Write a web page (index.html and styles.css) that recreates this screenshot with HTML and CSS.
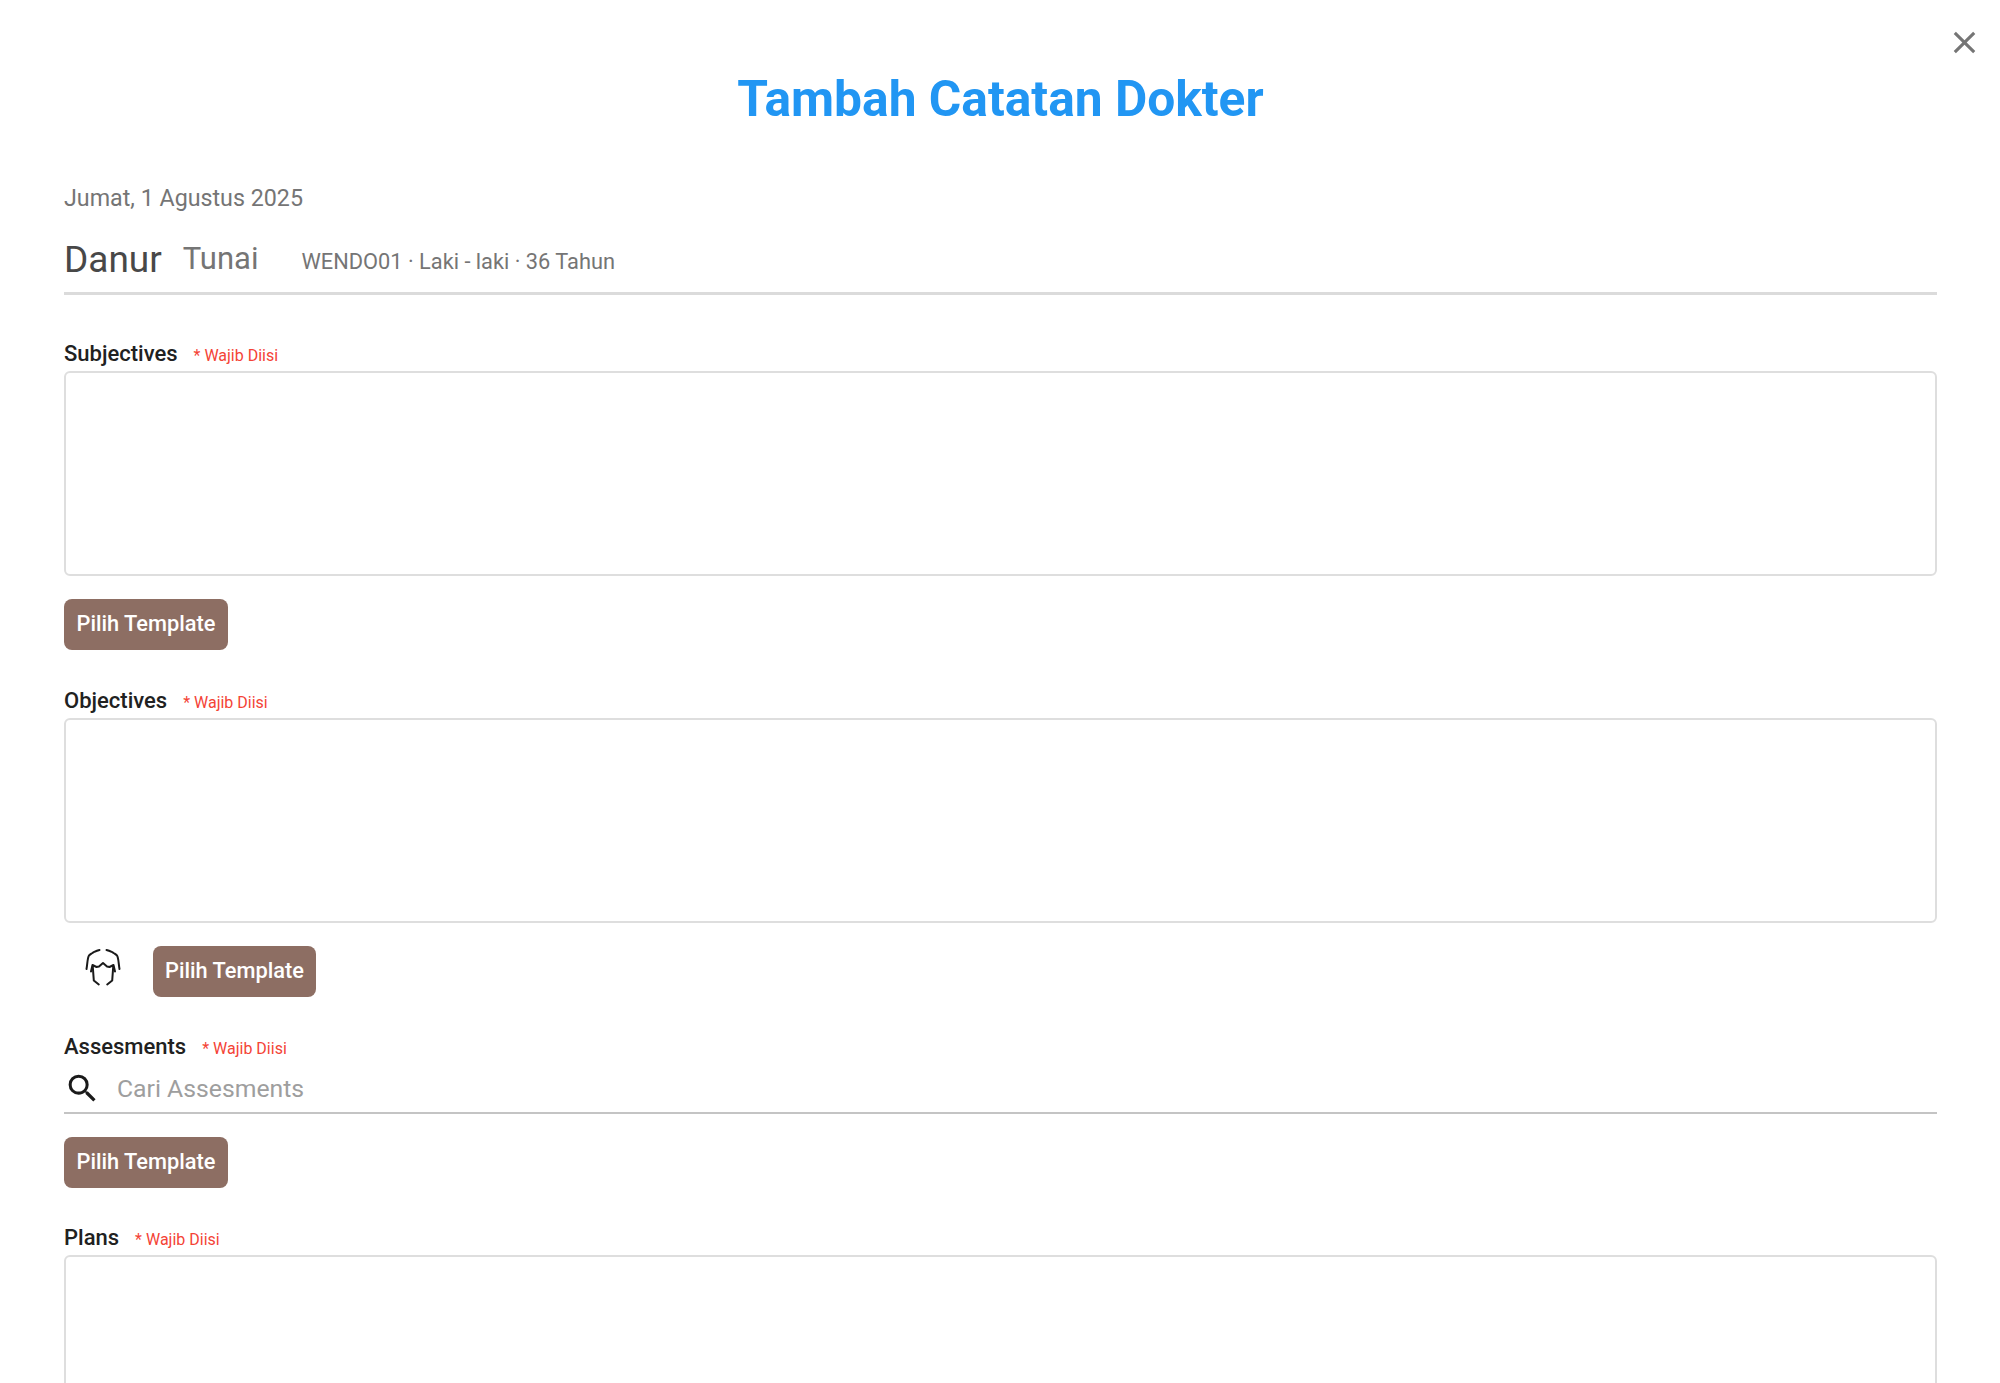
FILE: index.html
```html
<!DOCTYPE html>
<html lang="id">
<head>
<meta charset="utf-8">
<title>Tambah Catatan Dokter</title>
<link rel="stylesheet" href="styles.css">
</head>
<body>
<main class="dialog">
  <button class="close" aria-label="Tutup">
    <svg viewBox="0 0 24 24" width="37" height="37"><path d="M19 6.41 17.59 5 12 10.59 6.41 5 5 6.41 10.59 12 5 17.59 6.41 19 12 13.41 17.59 19 19 17.59 13.41 12z"/></svg>
  </button>
  <h1 class="title">Tambah Catatan Dokter</h1>
  <p class="date">Jumat, 1 Agustus 2025</p>
  <div class="patient">
    <span class="name">Danur</span>
    <span class="pay">Tunai</span>
    <span class="meta">WENDO01 · Laki - laki · 36 Tahun</span>
  </div>

  <section class="field">
    <div class="label"><span>Subjectives</span><em>* Wajib Diisi</em></div>
    <div class="box"></div>
    <div class="actions"><button class="tpl">Pilih Template</button></div>
  </section>

  <section class="field">
    <div class="label"><span>Objectives</span><em>* Wajib Diisi</em></div>
    <div class="box"></div>
    <div class="actions actions-tight">
      <span class="body-icon">
        <svg viewBox="0 0 52 52" width="52" height="52" fill="none" stroke="#1a1a1a" stroke-width="2" stroke-linecap="round" stroke-linejoin="round">
          <path d="M22.500 8C19 9 16.500 10 15.500 11 14 12 13 12.500 12 13.500 10.500 15.500 10.500 21 9.500 27"/>
          <path d="M29.500 8C33 9 35.500 10 36.500 11 38 12 39 12.500 40 13.500 41.500 15.500 41.500 21 42.500 27"/>
          <path d="M14 29.500 15.500 23 19.500 25 22 24.500 26 21 30 24.500 32.500 25 36.500 23 38 29.500"/>
          <path d="M15.800 25 16.800 38.500 21.800 42.500"/>
          <path d="M36.200 25 35.200 38.500 30.200 42.500"/>
        </svg>
      </span>
      <button class="tpl">Pilih Template</button>
    </div>
  </section>

  <section class="field">
    <div class="label"><span>Assesments</span><em>* Wajib Diisi</em></div>
    <div class="search">
      <svg viewBox="0 0 24 24" fill="#1a1a1a"><path d="M15.500 14h-.79l-.28-.27A6.470 6.470 0 0 0 16 9.500 6.500 6.500 0 1 0 9.500 16c1.610 0 3.090-.59 4.230-1.570l.27.28v.79l5 4.990L20.490 19l-4.990-5zm-6 0C7.010 14 5 11.990 5 9.500S7.010 5 9.500 5 14 7.010 14 9.500 11.990 14 9.500 14z"/></svg>
      <span class="placeholder">Cari Assesments</span>
    </div>
    <div class="actions actions-tight"><button class="tpl">Pilih Template</button></div>
  </section>

  <section class="field">
    <div class="label"><span>Plans</span><em>* Wajib Diisi</em></div>
    <div class="box"></div>
  </section>
</main>
</body>
</html>
```
FILE: styles.css
```css
* { box-sizing: border-box; }
html, body { margin: 0; background: #fff; }
body { font-family: Roboto, "Liberation Sans", sans-serif; }
.dialog { position: relative; height: 1383px; overflow: hidden; padding: 0 63px 0 64px; }
.close { position: absolute; top: 24px; right: 17px; width: 37px; height: 37px; padding: 0; border: 0; background: none; }
.close svg { display: block; fill: #757575; }
.title { margin: 0; padding-top: 71px; font-size: 49.7px; line-height: 56px; font-weight: 700; color: #2196f3; text-align: center; }
.date { margin: 57px 0 0; font-size: 23.25px; line-height: 29px; color: #757575; }
.patient { display: flex; align-items: flex-end; height: 82px; padding-bottom: 10px; border-bottom: 3px solid #dbdbdb; }
.name { font-size: 37px; line-height: 44px; color: #484848; margin-right: 21px; }
.pay { font-size: 31px; line-height: 44px; color: #757575; margin: 0 43px 1px 0; }
.meta { font-size: 21.8px; line-height: 30px; color: #757575; margin-bottom: 5px; }
.field { display: flex; flex-direction: column; }
.patient + .field { margin-top: 45px; }
.label { display: flex; align-items: baseline; gap: 16px; height: 28px; margin-bottom: 3px; font-size: 22px; line-height: 28px; font-weight: 500; color: #212121; }
.label em { font-style: normal; font-weight: 400; font-size: 16px; color: #f44336; }
.box { height: 205px; border: 2px solid #dedede; border-radius: 6px; }
.actions { display: flex; align-items: center; margin: 23px 0 37px; }
.actions-tight { margin-bottom: 36px; }
.tpl { width: 164px; height: 51px; padding: 0 0 2px; border: 0; border-radius: 8px; background: #8d6e63; color: #fff; font: 500 21.8px Roboto, sans-serif; }
.body-icon { display: flex; justify-content: center; width: 77px; height: 52px; margin: -7px 12px 0 0; }
.actions-tight .tpl { width: 163px; }
.search + .actions-tight .tpl { width: 164px; }
.search { display: flex; align-items: center; height: 49px; margin-top: 1px; border-bottom: 2px solid #c4c4c4; }
.search svg { width: 37px; height: 37px; margin-right: 16px; }
.placeholder { font-size: 24.75px; color: #9e9e9e; }
```
